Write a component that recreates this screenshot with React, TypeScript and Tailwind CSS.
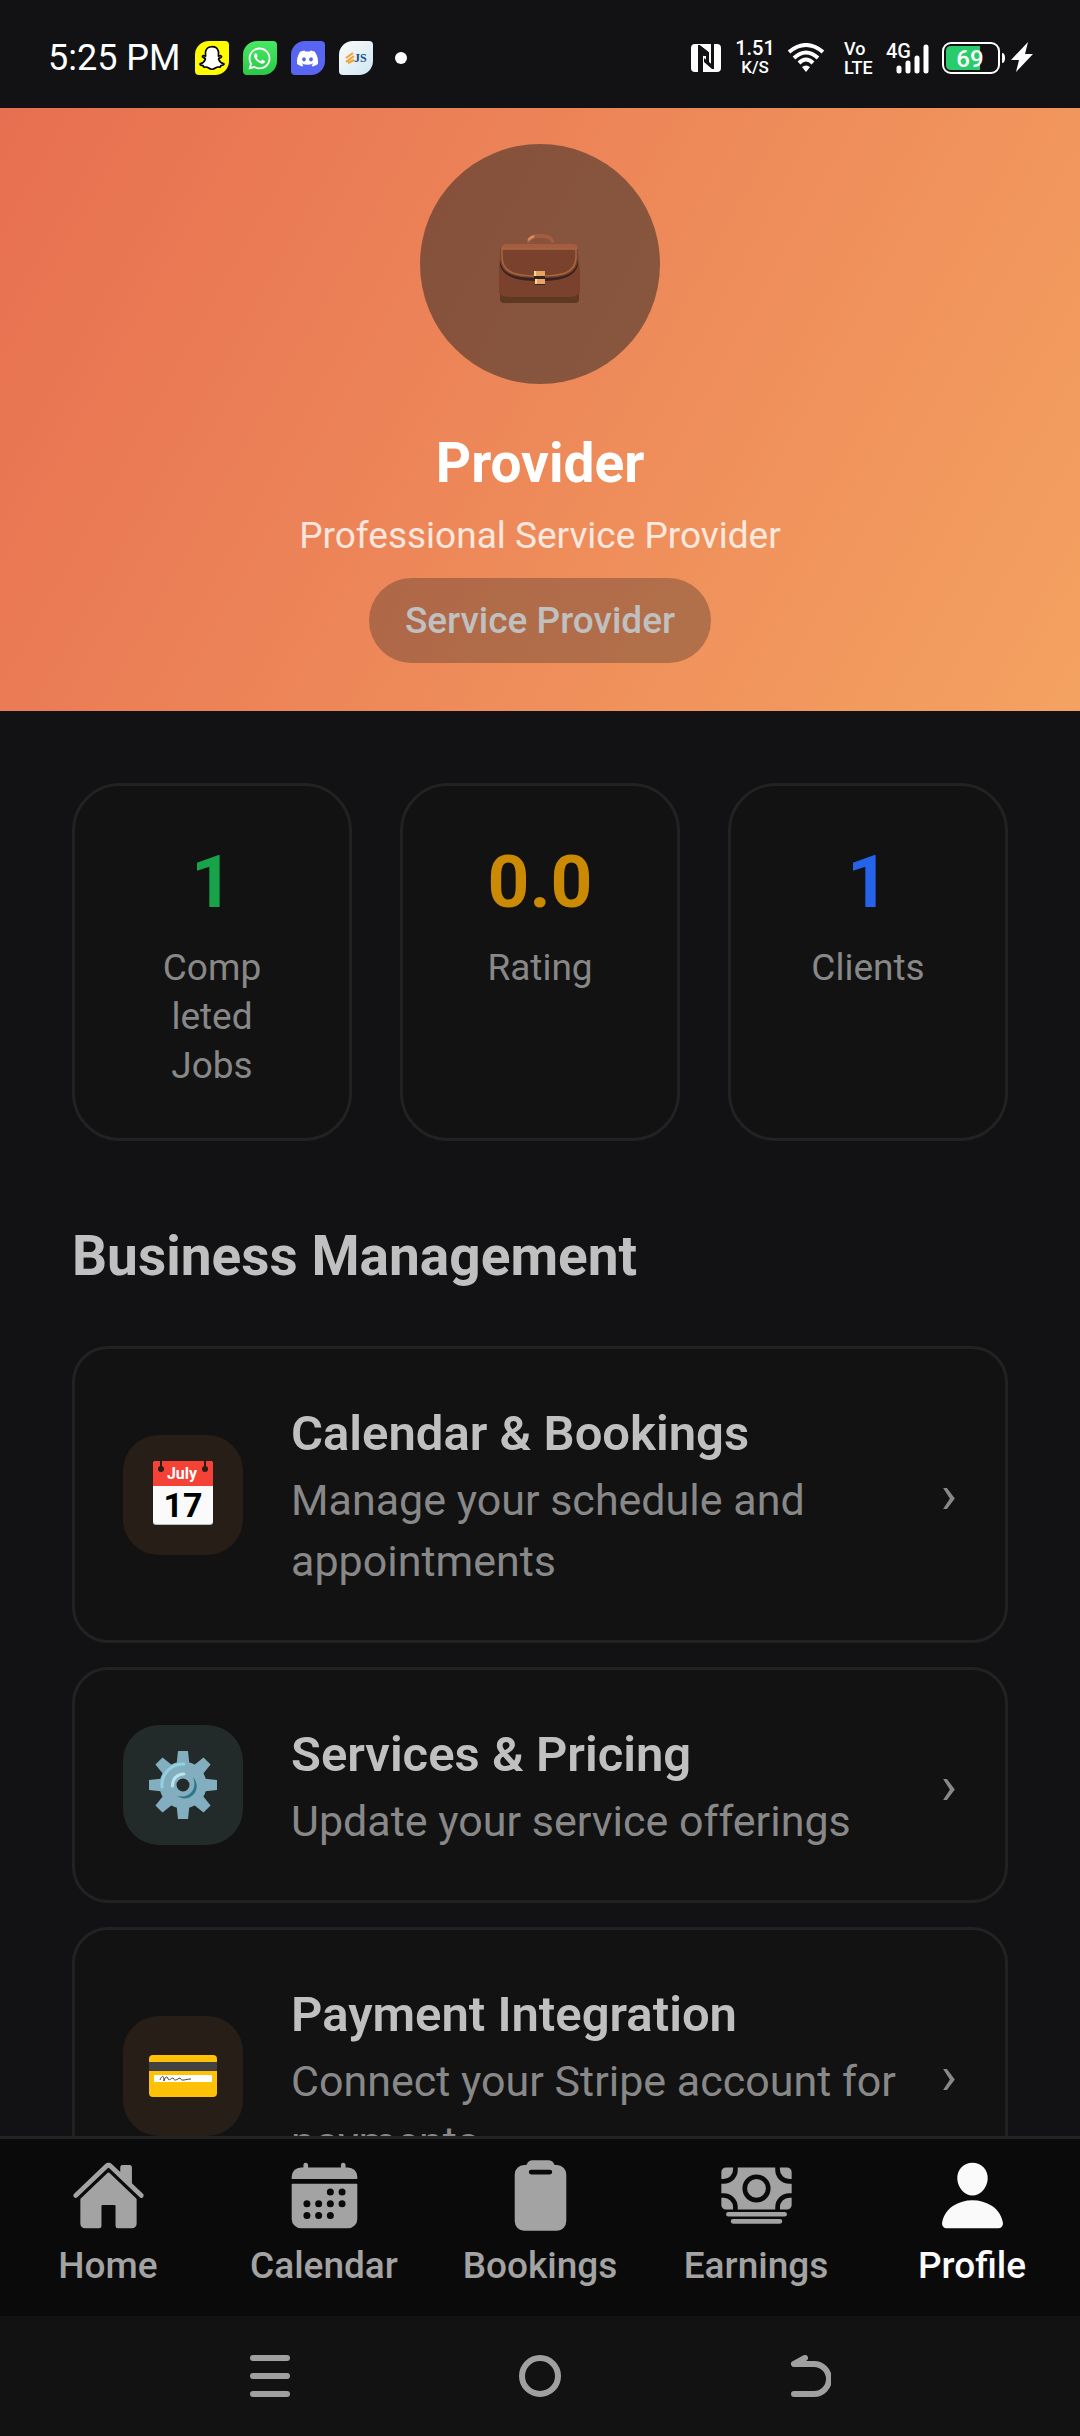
import React from "react";
import { IoHome, IoCalendar, IoClipboard, IoCash, IoPerson } from "react-icons/io5";
import { FaSnapchatGhost, FaWhatsapp, FaDiscord } from "react-icons/fa";

function BriefcaseIcon() {
  return (
    <svg viewBox="1 0 86 86" className="size-[86px]" aria-hidden="true">
      <path d="M31 22 C30.500 15 37.500 13 44.500 13 C51.500 13 58.500 15 58 22 L55.500 22 C54.500 17.500 49.500 17 44.500 17 C39.500 17 34.500 17.500 33.500 22 Z" fill="#a55d40" />
      <path d="M31.500 19 C32.500 16 35.500 14.500 39 14 L37.500 17 C34.500 18 33.500 19 33 20 Z" fill="#d98d60" />
      <path d="M4 70 h79 v8 q0 4 -4 4 h-71 q-4 0 -4 -4z" fill="#5d3822" />
      <path d="M4 32 Q4 23 9 23 H77 Q82 23 82 32 L84 50 V72 Q80 76 73 76 H13 Q6 76 3 72 V50 Z" fill="#7a422c" />
      <path d="M5 28 Q5 23 10 23 H77 Q82 23 82 28 L80 28 H6 Z" fill="#a55d40" />
      <path d="M4 39 C6 56 24 57 43 57 C62 57 80 56 82 39 L82 44 C78 58 61 60 43 60 C25 60 8 58 4 44 Z" fill="#3a2222" />
      <path d="M6 28 H80 V36 C80 53 64 55 43 55 C22 55 6 53 6 36 Z" fill="#7a422c" stroke="#a8683f" strokeWidth="1.500" />
      <path d="M38 50 h11 v5 h-11z M39 58 h10 v5 h-10z" fill="#e6a465" />
      <path d="M38 50 h2 v5 h-2z M39 58 h2 v5 h-2z" fill="#f8dc94" />
      <path d="M38 55 h11 v2 h-11z M39 63 h10 v1 h-10z" fill="#3a2222" />
    </svg>
  );
}

function CalendarEmoji() {
  return (
    <svg viewBox="0 0 72 72" className="size-[72px]" aria-hidden="true">
      <path d="M6 5 q0 -3 3 -3 h54 q3 0 3 3 v58 q0 3 -3 3 h-54 q-3 0 -3 -3z" fill="#b0bec5" />
      <path d="M6 27 h60 v35 q0 3 -3 3 h-54 q-3 0 -3 -3z" fill="#fafafa" />
      <path d="M6 5 q0 -3 3 -3 h54 q3 0 3 3 v22 h-60z" fill="#f44336" />
      <path d="M14 2 v7 M58 2 v7" stroke="#281e18" strokeWidth="2" />
      <circle cx="14" cy="10" r="3" fill="#281e18" />
      <circle cx="58" cy="10" r="3" fill="#281e18" />
      <text x="35" y="20" textAnchor="middle" fontFamily="Roboto, sans-serif" fontWeight="700" fontSize="16" fill="#fff">July</text>
      <text x="36" y="58" textAnchor="middle" fontFamily="Roboto, sans-serif" fontWeight="700" fontSize="34" fill="#000">17</text>
    </svg>
  );
}

const TEETH = [0, 45, 90, 135, 180, 225, 270, 315];

function GearEmoji() {
  return (
    <svg viewBox="0 0 72 72" className="size-[72px]" aria-hidden="true">
      <g fill="#82aec0">
        {TEETH.map((a) => (
          <path key={a} d="M31 2 H41 L42.500 16 H29.500 Z" transform={`rotate(${a} 36 36)`} />
        ))}
      </g>
      <circle cx="36" cy="36" r="15" fill="none" stroke="#82aec0" strokeWidth="17" />
      <path d="M15 38 A21 21 0 0 1 37 15" fill="none" stroke="#94d1e0" strokeWidth="3" strokeLinecap="round" />
      <path d="M25.500 37 A11 11 0 0 1 37 25" fill="none" stroke="#b9e4ea" strokeWidth="3" strokeLinecap="round" />
      <path d="M46 28 C51 34 51 41 46 46 C41 51 34 50 30 47 C36 48.500 41 47 44.500 43 C48 39 48 33 46 28 Z" fill="#2f7889" />
    </svg>
  );
}

function CardEmoji() {
  return (
    <svg viewBox="0 0 72 72" className="size-[72px]" aria-hidden="true">
      <rect x="2" y="15" width="68" height="42" rx="4" fill="#ffc107" />
      <rect x="2" y="22" width="68" height="9" fill="#424242" />
      <rect x="7" y="35" width="58" height="7" fill="#fff" />
      <path d="M13 40 C15 35 17 35 17 41 C18 36 21 36 21 39 C23 41 24 38 26 38 C28 42 30 39 33 38 C35 42 38 39 44 39" fill="none" stroke="#424242" strokeWidth="1" />
    </svg>
  );
}

function AppBadge({ className, children }: { className: string; children?: React.ReactNode }) {
  return (
    <span className={`flex size-[34px] items-center justify-center rounded-tl-[14px] rounded-tr-[4px] rounded-br-[14px] rounded-bl-[4px] ${className}`}>
      {children}
    </span>
  );
}

function StatusBar() {
  return (
    <header className="flex h-[108px] shrink-0 items-center justify-between bg-[#121214] pt-2 pr-[46px] pl-12 text-white">
      <div className="flex items-center gap-[14px]">
        <span className="text-[36px] leading-[42px]">5:25 PM</span>
        <AppBadge className="bg-[#fffc00]">
          <FaSnapchatGhost size={24} color="#fff" stroke="#000" strokeWidth={36} className="overflow-visible" />
        </AppBadge>
        <AppBadge className="bg-gradient-to-b from-[#48e764] to-[#28ca45]">
          <FaWhatsapp size={25} />
        </AppBadge>
        <AppBadge className="bg-[#5865f2]">
          <FaDiscord size={23} />
        </AppBadge>
        <AppBadge className="bg-gradient-to-br from-[#fcfcfc] to-[#cfe6f2]">
          <svg viewBox="0 0 22 14" className="h-[14px] w-[22px]" aria-hidden="true">
            <path d="M1 7 L8 2 M1 11 L9 5 M3 12 L9 9" stroke="#f5a030" strokeWidth="2" />
            <text x="9" y="11" fontFamily="Liberation Serif, serif" fontWeight="700" fontSize="12" fill="#1c4c84">JS</text>
          </svg>
        </AppBadge>
        <span className="ml-2 size-3 rounded-full bg-white" />
      </div>
      <div className="flex items-center">
        <svg viewBox="0 0 30 28" className="h-7 w-[30px]" aria-hidden="true">
          <path d="M4 0 H7 V28 H4 Q0 28 0 24 V4 Q0 0 4 0 Z M7 0 H20 V14 L18 12 V9 L9 2 H7 Z M12 12 H15 V18 L22 24 H23 V28 H10 V10 Z M23 0 H26 Q30 0 30 4 V24 Q30 28 26 28 H23 Z" fill="#fff" />
          <path d="M7 1 H9 L18 8 V14 L12 9 V28 H7 Z" fill="#121214" />
          <path d="M12 11 V28 H24 V24 L13 16 M9 0 H20 V20 L18 18 V8 L9 1 Z" fill="#fff" />
          <path d="M13 14 L20 20 V0 H23 V25 H21 L13 18 Z" fill="#121214" />
        </svg>
        <span className="ml-4 flex w-9 flex-col items-center font-medium">
          <span className="text-[20px] leading-[19px]">1.51</span>
          <span className="text-[17px] leading-[19px]">K/S</span>
        </span>
        <svg viewBox="0 0 38 30" className="ml-[14px] h-[30px] w-[38px]" fill="none" stroke="#fff" strokeWidth="4" aria-hidden="true">
          <path d="M2 9 Q19 -5 36 9" />
          <path d="M7 15 Q19 4 31 15" />
          <path d="M12 20 Q19 13 26 20" />
          <path d="M15 24 Q19 21 23 24 L19 29 Z" fill="#fff" stroke="none" />
        </svg>
        <span className="ml-[19px] flex w-[30px] flex-col font-medium">
          <span className="text-[18px] leading-[19px]">Vo</span>
          <span className="text-[18px] leading-[19px]">LTE</span>
        </span>
        <span className="relative ml-3 h-8 w-[44px]">
          <span className="absolute top-0 left-0 text-[20px] leading-[18px] font-medium">4G</span>
          <svg viewBox="0 0 44 32" className="absolute inset-0 h-8 w-[44px]" stroke="#fff" strokeWidth="5" strokeLinecap="round" aria-hidden="true">
            <path d="M13 26 V29 M22 21 V29 M31 16 V29 M40 5 V29" />
          </svg>
        </span>
        <svg viewBox="0 0 92 34" className="ml-3 h-[34px] w-[92px]" aria-hidden="true">
          <rect x="1" y="2" width="56" height="30" rx="8" fill="none" stroke="#fff" strokeWidth="2" />
          <path d="M9 5 H38 V29 H9 Q4 29 4 24 V10 Q4 5 9 5Z" fill="#29cc6a" />
          <path d="M60 12 Q63 12 63 17 Q63 22 60 22Z" fill="#fff" />
          <text x="28" y="26" textAnchor="middle" fontFamily="Roboto, sans-serif" fontWeight="500" fontSize="24" fill="#fff">69</text>
          <path d="M86 1 L69 19 H77 L74 31 L91 13 H83 Z" fill="#fff" />
        </svg>
      </div>
    </header>
  );
}

const stats = [
  { value: "1", label: "Comp\nleted\nJobs", color: "text-[#16a34a]" },
  { value: "0.0", label: "Rating", color: "text-[#ca8a04]" },
  { value: "1", label: "Clients", color: "text-[#2563eb]" },
];

const menu = [
  { title: "Calendar & Bookings", text: "Manage your schedule and appointments", tile: "bg-[#281e18]", Icon: CalendarEmoji },
  { title: "Services & Pricing", text: "Update your service offerings", tile: "bg-[#222a2a]", Icon: GearEmoji },
  { title: "Payment Integration", text: "Connect your Stripe account for payments", tile: "bg-[#281e18]", Icon: CardEmoji },
];

const tabs = [
  { label: "Home", Icon: IoHome },
  { label: "Calendar", Icon: IoCalendar },
  { label: "Bookings", Icon: IoClipboard },
  { label: "Earnings", Icon: IoCash },
  { label: "Profile", Icon: IoPerson, active: true },
];

export default function App() {
  return (
    <div className="flex h-screen flex-col overflow-hidden bg-[#121214] font-[Roboto,sans-serif]">
      <StatusBar />

      <main className="min-h-0 flex-1 overflow-hidden">
        <section className="flex flex-col items-center bg-[linear-gradient(119deg,#e76f51,#f4a261)] pt-9 pb-12">
          <div className="flex size-60 items-center justify-center rounded-full bg-[#222222]/50">
            <BriefcaseIcon />
          </div>
          <h1 className="mt-12 text-[55px] leading-[63px] font-bold text-white">Provider</h1>
          <p className="mt-4 text-[37px] leading-[49px] text-white/80">Professional Service Provider</p>
          <span className="mt-[18px] rounded-full bg-[#222222]/30 px-9 py-[18px] text-[37px] leading-[49px] font-medium text-[#c0c0c0]">
            Service Provider
          </span>
        </section>

        <div className="px-[72px] pt-[72px]">
          <section className="grid grid-cols-3 gap-12">
            {stats.map((s) => (
              <div key={s.label} className="rounded-[48px] border-3 border-[#222222] bg-[#121212] py-12 text-center">
                <div className={`mb-3 text-[73px] leading-[97px] font-bold ${s.color}`}>{s.value}</div>
                <div className="text-[37px] leading-[49px] whitespace-pre-line text-[#888888]">{s.label}</div>
              </div>
            ))}
          </section>

          <h2 className="mt-[76px] mb-[51px] text-[55px] leading-[78px] font-bold text-[#c0c0c0]">Business Management</h2>

          <div className="flex flex-col gap-6">
            {menu.map(({ title, text, tile, Icon }) => (
              <button key={title} type="button" className="flex items-center rounded-[36px] border-3 border-[#222222] bg-[#121212] p-12 text-left">
                <span className={`flex size-[120px] shrink-0 items-center justify-center rounded-[36px] ${tile}`}>
                  <Icon />
                </span>
                <span className="ml-12 flex-1">
                  <span className="block text-[49px] leading-[73px] font-semibold text-[#c0c0c0]">{title}</span>
                  <span className="block text-[43px] leading-[61px] text-[#888888]">{text}</span>
                </span>
                <span className="text-[54px] leading-[61px] text-[#888888]">›</span>
              </button>
            ))}
          </div>
        </div>
      </main>

      <nav className="grid h-[180px] shrink-0 grid-cols-5 border-t-3 border-[#222222] bg-[#0a0a0a]">
        {tabs.map(({ label, Icon, active }) => (
          <a key={label} href={`#${label.toLowerCase()}`} className={`flex flex-col items-center pt-[19px] ${active ? "text-[#fafafa]" : "text-[#a3a3a3]"}`}>
            <Icon size={75} />
            <span className="mt-2 text-[37px] leading-[49px] font-medium">{label}</span>
          </a>
        ))}
      </nav>

      <div className="grid h-[120px] shrink-0 grid-cols-3 place-items-center bg-[#121212] px-[12.5%]">
        <button type="button" aria-label="Recent apps">
          <svg viewBox="0 0 42 42" className="size-[42px]" stroke="#a0a0a0" strokeWidth="6" strokeLinecap="round" aria-hidden="true">
            <path d="M4 3 H38 M4 21 H38 M4 39 H38" />
          </svg>
        </button>
        <button type="button" aria-label="Home screen">
          <svg viewBox="0 0 42 42" className="size-[42px]" fill="none" stroke="#a0a0a0" strokeWidth="6" aria-hidden="true">
            <circle cx="21" cy="21" r="18" />
          </svg>
        </button>
        <button type="button" aria-label="Back">
          <svg viewBox="0 0 42 42" className="size-[42px]" fill="none" stroke="#a0a0a0" strokeWidth="6" strokeLinecap="round" strokeLinejoin="round" aria-hidden="true">
            <path d="M16 3 L5 9 H25 A15 15 0 0 1 25 39 H5" />
          </svg>
        </button>
      </div>
    </div>
  );
}
